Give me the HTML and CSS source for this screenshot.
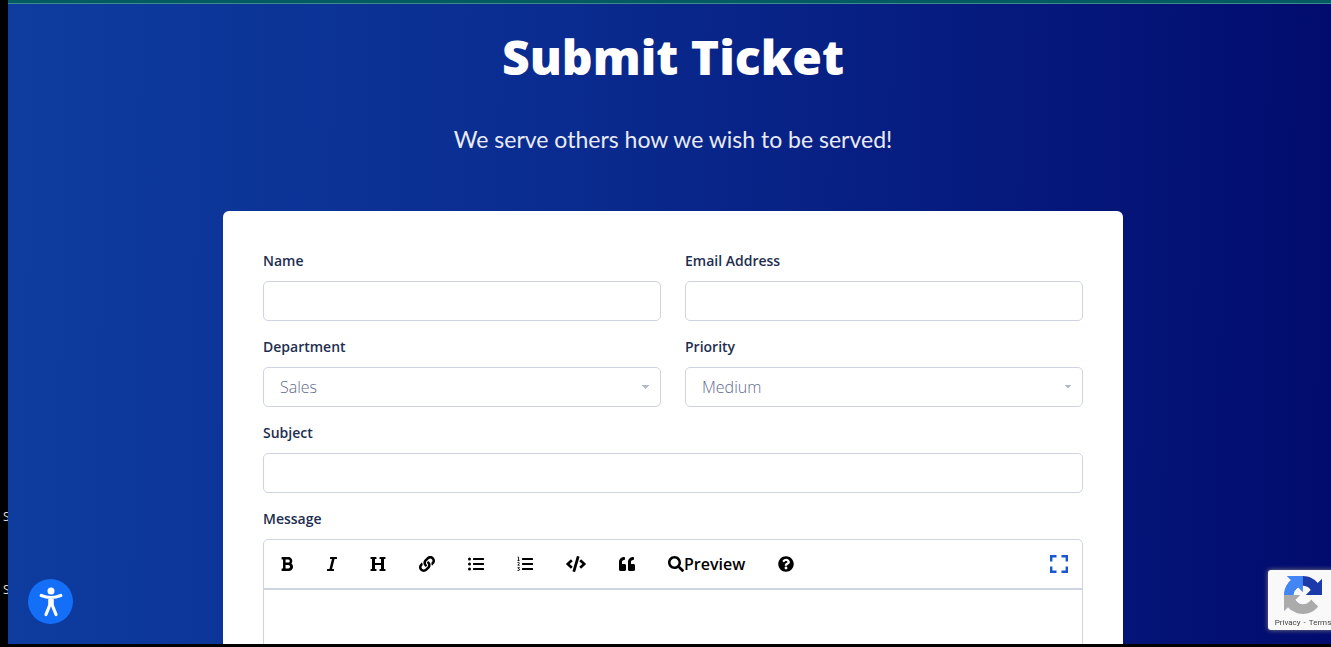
FILE: index.html
```html
<!DOCTYPE html>
<html lang="en">
<head>
<meta charset="utf-8">
<title>Submit Ticket</title>
<link rel="stylesheet" href="styles.css">
</head>
<body>
<aside class="edge"><span>S</span><span>S</span></aside>
<main class="page">
  <div class="topbar"></div>
  <header class="hero">
    <h1>Submit Ticket</h1>
    <p>We serve others how we wish to be served!</p>
  </header>
  <form class="card">
    <div class="field"><label for="name">Name</label><input id="name" type="text"></div>
    <div class="field"><label for="email">Email Address</label><input id="email" type="email"></div>
    <div class="field"><label for="dept">Department</label>
      <select id="dept"><option>Sales</option></select></div>
    <div class="field"><label for="prio">Priority</label>
      <select id="prio"><option>Medium</option></select></div>
    <div class="field wide"><label for="subject">Subject</label><input id="subject" type="text"></div>
    <div class="field wide"><label for="message">Message</label>
      <div class="editor">
        <div class="toolbar">
          <button type="button" aria-label="Bold"><svg width="14" height="16" viewBox="0 0 384 512"><path d="M333.49 238a122 122 0 0 0 27-65.21C367.87 96.49 308 32 233.42 32H34a16 16 0 0 0-16 16v48a16 16 0 0 0 16 16h31.87v288H34a16 16 0 0 0-16 16v48a16 16 0 0 0 16 16h209.32c70.8 0 134.14-51.75 141-122.4 4.74-48.45-16.39-92.06-50.83-119.6zM145.66 112h87.76a48 48 0 0 1 0 96h-87.76zm87.76 288h-87.76V288h87.76a56 56 0 0 1 0 112z"/></svg></button>
          <button type="button" aria-label="Italic"><svg width="10" height="16" viewBox="0 0 320 512"><path d="M320 48v32a16 16 0 0 1-16 16h-62.76l-80 320H208a16 16 0 0 1 16 16v32a16 16 0 0 1-16 16H16a16 16 0 0 1-16-16v-32a16 16 0 0 1 16-16h62.76l80-320H112a16 16 0 0 1-16-16V48a16 16 0 0 1 16-16h192a16 16 0 0 1 16 16z"/></svg></button>
          <button type="button" aria-label="Heading"><svg width="16" height="16" viewBox="0 0 512 512"><path d="M448 96v320h32a16 16 0 0 1 16 16v32a16 16 0 0 1-16 16H320a16 16 0 0 1-16-16v-32a16 16 0 0 1 16-16h32V288H160v128h32a16 16 0 0 1 16 16v32a16 16 0 0 1-16 16H32a16 16 0 0 1-16-16v-32a16 16 0 0 1 16-16h32V96H32a16 16 0 0 1-16-16V48a16 16 0 0 1 16-16h160a16 16 0 0 1 16 16v32a16 16 0 0 1-16 16h-32v128h192V96h-32a16 16 0 0 1-16-16V48a16 16 0 0 1 16-16h160a16 16 0 0 1 16 16v32a16 16 0 0 1-16 16z"/></svg></button>
          <button type="button" aria-label="Link"><svg width="16" height="16" viewBox="0 0 512 512"><path d="M326.612 185.391c59.747 59.809 58.927 155.698.36 214.59-.11.12-.24.25-.36.37l-67.2 67.2c-59.27 59.27-155.699 59.262-214.96 0-59.27-59.26-59.27-155.7 0-214.96l37.106-37.106c9.84-9.84 26.786-3.3 27.294 10.606.648 17.722 3.826 35.527 9.69 52.721 1.986 5.822.567 12.262-3.783 16.612l-13.087 13.087c-28.026 28.026-28.905 73.66-1.155 101.96 28.024 28.579 74.086 28.749 102.325.51l67.2-67.19c28.191-28.191 28.073-73.757 0-101.83-3.701-3.694-7.429-6.564-10.341-8.569a16.037 16.037 0 0 1-6.947-12.606c-.396-10.567 3.348-21.456 11.698-29.806l21.054-21.055c5.521-5.521 14.182-6.199 20.584-1.731a152.482 152.482 0 0 1 20.522 17.197zM467.547 44.449c-59.261-59.262-155.69-59.27-214.96 0l-67.2 67.2c-.12.12-.25.25-.36.37-58.566 58.892-59.387 154.781.36 214.59a152.454 152.454 0 0 0 20.521 17.196c6.402 4.468 15.064 3.789 20.584-1.731l21.054-21.055c8.35-8.35 12.094-19.239 11.698-29.806a16.037 16.037 0 0 0-6.947-12.606c-2.912-2.005-6.64-4.875-10.341-8.569-28.073-28.073-28.191-73.639 0-101.83l67.2-67.19c28.239-28.239 74.3-28.069 102.325.51 27.75 28.3 26.872 73.934-1.155 101.96l-13.087 13.087c-4.35 4.35-5.769 10.79-3.783 16.612 5.864 17.194 9.042 34.999 9.69 52.721.509 13.906 17.454 20.446 27.294 10.606l37.106-37.106c59.271-59.259 59.271-155.699.001-214.959z"/></svg></button>
          <button type="button" aria-label="Bulleted list"><svg width="16" height="16" viewBox="0 0 512 512"><circle cx="48" cy="96" r="48"/><circle cx="48" cy="256" r="48"/><circle cx="48" cy="416" r="48"/><rect x="160" y="64" width="352" height="64" rx="16"/><rect x="160" y="224" width="352" height="64" rx="16"/><rect x="160" y="384" width="352" height="64" rx="16"/></svg></button>
          <button type="button" aria-label="Numbered list"><svg width="16" height="16" viewBox="0 0 512 512"><rect x="160" y="64" width="352" height="64" rx="16"/><rect x="160" y="224" width="352" height="64" rx="16"/><rect x="160" y="384" width="352" height="64" rx="16"/><path fill="none" stroke="currentColor" stroke-width="28" d="M20 36h30v106M16 142h66M16 206q64-20 56 26-4 22-48 62h64M16 372h62l-36 38q46-4 40 32-12 38-66 18"/></svg></button>
          <button type="button" aria-label="Code"><svg width="20" height="16" viewBox="0 0 640 512"><path d="M278.9 511.5l-61-17.7c-6.4-1.8-10-8.5-8.2-14.9L346.2 8.7c1.8-6.4 8.5-10 14.9-8.2l61 17.7c6.4 1.8 10 8.5 8.2 14.9L293.8 503.3c-1.9 6.4-8.5 10.1-14.9 8.2zm-114-112.2l43.5-46.4c4.6-4.9 4.3-12.7-.8-17.2L117 256l90.6-79.7c5.1-4.5 5.5-12.3.8-17.2l-43.5-46.4c-4.5-4.8-12.1-5.1-17-.5L3.8 247.2c-5.1 4.7-5.1 12.8 0 17.5l144.1 135.1c4.9 4.6 12.5 4.4 17-.5zm327.2.6l144.1-135.1c5.1-4.7 5.1-12.8 0-17.5L492.1 112.1c-4.8-4.5-12.4-4.3-17 .5L431.6 159c-4.6 4.9-4.3 12.7.8 17.2L523 256l-90.6 79.7c-5.1 4.5-5.5 12.3-.8 17.2l43.5 46.4c4.5 4.9 12.1 5.1 17 .6z"/></svg></button>
          <button type="button" aria-label="Quote"><svg width="16" height="16" viewBox="0 0 512 512"><path d="M464 256h-80v-64c0-35.3 28.7-64 64-64h8c13.3 0 24-10.7 24-24V56c0-13.3-10.7-24-24-24h-8c-88.4 0-160 71.6-160 160v240c0 26.5 21.5 48 48 48h128c26.5 0 48-21.5 48-48V304c0-26.5-21.5-48-48-48zm-288 0H96v-64c0-35.3 28.7-64 64-64h8c13.3 0 24-10.7 24-24V56c0-13.3-10.7-24-24-24h-8C71.6 32 0 103.6 0 192v240c0 26.5 21.5 48 48 48h128c26.5 0 48-21.5 48-48V304c0-26.5-21.5-48-48-48z"/></svg></button>
          <button type="button" class="preview"><svg width="16" height="16" viewBox="0 0 512 512"><path d="M505 442.7L405.3 343c-4.5-4.5-10.6-7-17-7H372c27.6-35.3 44-79.7 44-128C416 93.1 322.9 0 208 0S0 93.1 0 208s93.1 208 208 208c48.3 0 92.7-16.4 128-44v16.3c0 6.4 2.5 12.5 7 17l99.7 99.7c9.4 9.4 24.6 9.4 33.9 0l28.3-28.3c9.4-9.4 9.4-24.6.1-34zM208 336c-70.7 0-128-57.2-128-128 0-70.7 57.2-128 128-128 70.7 0 128 57.2 128 128 0 70.7-57.2 128-128 128z"/></svg>Preview</button>
          <button type="button" aria-label="Help"><svg width="16" height="16" viewBox="0 0 512 512"><path d="M504 256c0 136.997-111.043 248-248 248S8 392.997 8 256C8 119.083 119.043 8 256 8s248 111.083 248 248zM262.655 90c-54.497 0-89.255 22.957-116.549 63.758-3.536 5.286-2.353 12.415 2.715 16.258l34.699 26.31c5.205 3.947 12.621 3.008 16.665-2.122 17.864-22.658 30.113-35.797 57.303-35.797 20.429 0 45.698 13.148 45.698 32.958 0 14.976-12.363 22.667-32.534 33.976C247.128 238.528 216 254.941 216 296v4c0 6.627 5.373 12 12 12h56c6.627 0 12-5.373 12-12v-1.333c0-28.462 83.186-29.647 83.186-106.667 0-58.002-60.165-102-116.531-102zM256 338c-25.365 0-46 20.635-46 46 0 25.364 20.635 46 46 46s46-20.636 46-46c0-25.365-20.635-46-46-46z"/></svg></button>
          <button type="button" class="expand" aria-label="Fullscreen"><svg width="18" height="18" viewBox="0 0 18 18"><path fill="none" stroke="currentColor" stroke-width="2.400" d="M1.200 6.500V1.200h5.300M11.500 1.200h5.300v5.300M16.800 11.500v5.300h-5.300M6.500 16.800H1.200v-5.300"/></svg></button>
        </div>
        <textarea id="message"></textarea>
      </div>
    </div>
  </form>
</main>
<button type="button" class="access" aria-label="Accessibility options"><svg width="24" height="30" viewBox="0 0 24 30"><circle cx="12" cy="4" r="3.500"/><path fill="none" stroke="currentColor" stroke-width="3.200" stroke-linecap="round" stroke-linejoin="round" d="M2.200 8.500Q12 12.500 21.800 8.500M12 12v6M10.800 12.500v5.500L7 27.500M13.200 12.500v5.500L17 27.500"/></svg></button>
<aside class="captcha">
  <svg width="38" height="38" viewBox="0 0 64 64"><path fill="#1c3aa9" d="M64 31.955l-.033-1.370V4.687l-7.160 7.160C50.948 4.674 42.033.093 32.050.093c-10.400 0-19.622 4.960-25.458 12.640l11.736 11.860a15.550 15.550 0 0 1 4.754-5.334c2.050-1.600 4.952-2.906 8.968-2.906.485 0 .860.057 1.135.163 4.976.393 9.288 3.140 11.828 7.124l-8.307 8.307L64 31.953"/><path fill="#4285f4" d="M31.862.094l-1.370.033H4.594l7.160 7.160C4.580 13.147 0 22.060 0 32.046c0 10.400 4.960 19.622 12.640 25.458L24.500 45.768a15.550 15.550 0 0 1-5.334-4.754c-1.600-2.050-2.906-4.952-2.906-8.968 0-.485.057-.860.163-1.135.393-4.976 3.140-9.288 7.124-11.828l8.307 8.307L31.860.095"/><path fill="#ababab" d="M.001 32.045l.033 1.370v25.898l7.160-7.160c5.860 7.173 14.774 11.754 24.760 11.754 10.400 0 19.622-4.960 25.458-12.640l-11.736-11.860a15.550 15.550 0 0 1-4.754 5.334c-2.050 1.600-4.952 2.906-8.968 2.906-.485 0-.860-.057-1.135-.163-4.976-.393-9.288-3.140-11.828-7.124l8.307-8.307c-10.522.040-22.400.066-27.295-.005"/></svg>
  <div class="legal"><a href="#privacy">Privacy</a><span>-</span><a href="#terms">Terms</a></div>
</aside>
</body>
</html>
```
FILE: styles.css
```css
* { box-sizing: border-box; }

body {
  display: flex;
  height: 100vh;
  margin: 0;
  padding-bottom: 3px;
  overflow: hidden;
  background: #000;
  font-family: "Open Sans", sans-serif;
}

.edge {
  display: flex;
  flex: 0 0 8px;
  flex-direction: column;
  align-items: flex-start;
  justify-content: flex-end;
  gap: 57px;
  padding: 0 0 46px 3px;
  overflow: hidden;
  color: #ddd;
  font: 12px/16px "Open Sans", sans-serif;
}

.page {
  flex: 1 0 auto;
  width: calc(100% - 1px);
  overflow: hidden;
  background: linear-gradient(91deg, #0e3c9f, #0a2c90 40%, #020b6e);
}

.topbar {
  height: 4px;
  border-bottom: 1px solid #3c8a8c;
  background: #045c62;
}

.hero {
  color: #fff;
  text-align: center;
}

.hero h1 {
  margin: 23px 0 37px;
  font: 800 48px/60px "Open Sans", sans-serif;
}

.hero p {
  margin: 0 0 57px;
  color: #e8ebf5;
  font: 23px/30px Lato, sans-serif;
}

.card {
  display: grid;
  grid-template-columns: 1fr 1fr;
  gap: 16px 24px;
  width: 100%;
  max-width: 900px;
  margin: 0 auto;
  padding: 40px;
  border-radius: 6px;
  background: #fff;
}

.field {
  display: flex;
  flex-direction: column;
  gap: 10px;
}

.wide { grid-column: 1 / -1; }

.field label {
  color: #1e2e50;
  font-size: 14px;
  font-weight: 600;
  line-height: 20px;
}

.field input,
.field select {
  width: 100%;
  height: 40px;
  padding: 0 16px;
  border: 1px solid #ced4e0;
  border-radius: 5px;
  background: #fff;
  color: #5f6a8c;
  font: 300 16px "Open Sans", sans-serif;
}

.field select {
  appearance: none;
  background-image: linear-gradient(to bottom left, #b4bac8 50%, transparent 50%), linear-gradient(to bottom right, #b4bac8 50%, transparent 50%);
  background-position: right 14px center, right 10px center;
  background-repeat: no-repeat;
  background-size: 4px 4px;
}

.editor {
  border: 1px solid #ced4e0;
  border-radius: 5px;
}

.toolbar {
  display: flex;
  align-items: center;
  gap: 33px;
  height: 50px;
  padding: 0 14px 0 16px;
  border-bottom: 2px solid #ced4e0;
}

.toolbar button {
  display: flex;
  align-items: center;
  padding: 0;
  border: 0;
  background: none;
  color: #000;
}

.toolbar svg { fill: currentColor; }

.toolbar .preview { font: 600 16px/24px "Open Sans", sans-serif; }

.toolbar .expand {
  margin-left: auto;
  color: #1a56cf;
}

.editor textarea {
  display: block;
  width: 100%;
  height: 200px;
  border: 0;
  background: none;
  resize: none;
}

.access {
  position: fixed;
  bottom: 23px;
  left: 28px;
  display: flex;
  align-items: center;
  justify-content: center;
  width: 45px;
  height: 45px;
  padding: 0;
  border: 0;
  border-radius: 50%;
  background: #146ff8;
  color: #fff;
}

.access svg { fill: currentColor; }

.captcha {
  position: fixed;
  right: -7px;
  bottom: 17px;
  display: flex;
  flex-direction: column;
  align-items: center;
  gap: 4px;
  width: 70px;
  height: 60px;
  padding-top: 6px;
  border-radius: 3px;
  background: #f9f9f9;
  box-shadow: 0 0 5px gray;
}

.legal {
  display: flex;
  gap: 3px;
  color: #444;
  font: 8px/10px Roboto, sans-serif;
}

.legal a {
  color: inherit;
  text-decoration: none;
}
```
